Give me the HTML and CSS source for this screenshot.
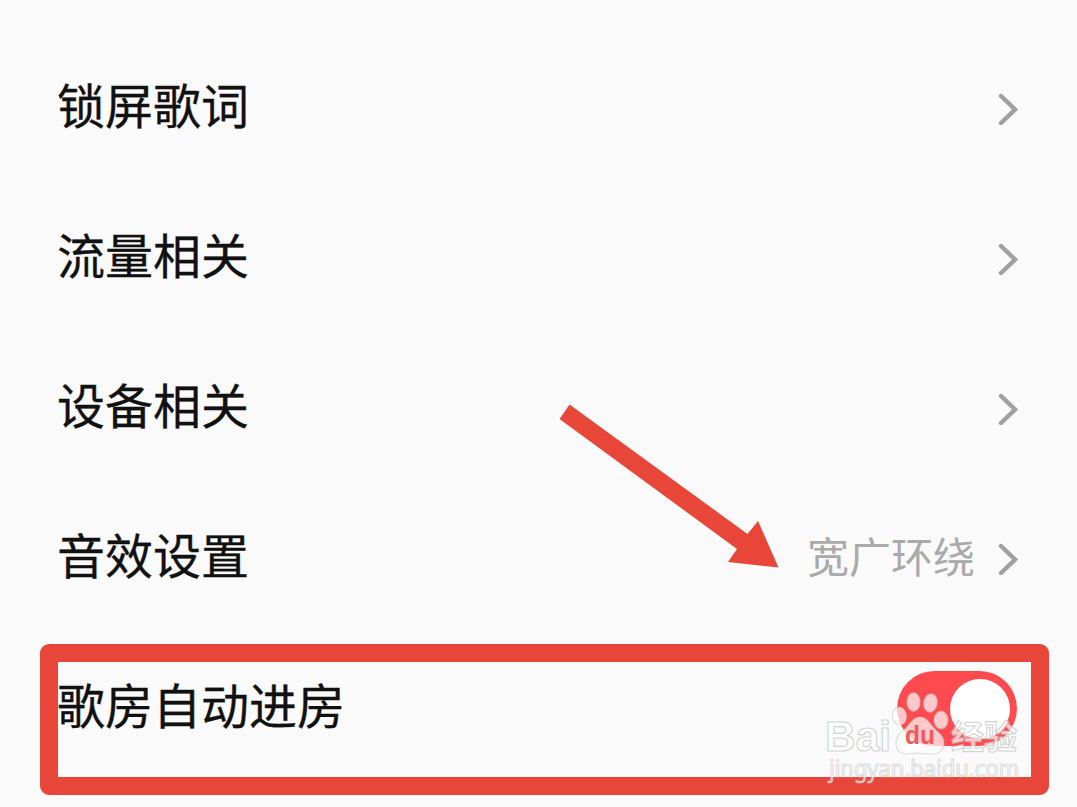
FILE: index.html
```html
<!DOCTYPE html>
<html lang="zh-CN">

<head>
    <meta charset="UTF-8">
    <meta name="viewport" content="width=device-width, initial-scale=1.0">
    <title>设置</title>
    <link rel="stylesheet" href="styles.css">
</head>

<body>
    <div class="settings">
        <div class="row">
            <span class="label">锁屏歌词</span>
            <svg class="chevron" viewBox="0 0 20 32"><path d="M3 3L17 16.5L3 30" /></svg>
        </div>
        <div class="row">
            <span class="label">流量相关</span>
            <svg class="chevron" viewBox="0 0 20 32"><path d="M3 3L17 16.5L3 30" /></svg>
        </div>
        <div class="row">
            <span class="label">设备相关</span>
            <svg class="chevron" viewBox="0 0 20 32"><path d="M3 3L17 16.5L3 30" /></svg>
        </div>
        <div class="row">
            <span class="label">音效设置</span>
            <span class="value">宽广环绕</span>
            <svg class="chevron" viewBox="0 0 20 32"><path d="M3 3L17 16.5L3 30" /></svg>
        </div>
        <div class="row">
            <span class="label">歌房自动进房</span>
            <span class="toggle"><span class="knob"></span></span>
        </div>
    </div>

    <!-- Annotations over the list -->
    <div class="frame"></div>
    <svg class="arrow" viewBox="0 0 220 164">
        <polygon points="10.5,0.5 188.5,130 199,117 219.5,163.5 169,158 178,145 0.5,15" />
    </svg>

    <!-- Watermark -->
    <svg class="watermark" viewBox="0 0 200 100">
        <g class="paw">
            <ellipse cx="77.5" cy="31" rx="7" ry="9" transform="rotate(-8 77.5 31)" />
            <ellipse cx="91.5" cy="17" rx="6.6" ry="9.3" />
            <ellipse cx="108.5" cy="18" rx="6.8" ry="9.2" transform="rotate(10 108.5 18)" />
            <ellipse cx="119" cy="35" rx="7" ry="9" />
            <path d="M98 32C104 32 107 37 111 42C116 48 122 50 122 58C122 65 117 69 110 69C103 69 93 67 86 69C79 70 74 66 74 58C74 50 80 47 85 42C89 37 92 32 98 32Z" />
        </g>
        <text class="wm-logo" x="3" y="66" textLength="66" lengthAdjust="spacingAndGlyphs">Bai</text>
        <text class="wm-du" x="83" y="59" textLength="30" lengthAdjust="spacingAndGlyphs">du</text>
        <text class="wm-name" x="129" y="64">经验</text>
        <text class="wm-url" x="7" y="92" textLength="190" lengthAdjust="spacingAndGlyphs">jingyan.baidu.com</text>
    </svg>
</body>

</html>
```
FILE: styles.css
```css
body {
    position: relative;
    margin: 0;
    width: 1077px;
    height: 807px;
    overflow: hidden;
    background: #fafafa;
    font-family: "Noto Sans CJK SC", sans-serif;
    color: #111;
}
/* Settings list */

.settings {
    padding: 34px 60px 0 57px;
}

.row {
    display: flex;
    align-items: center;
    height: 150px;
}

.label {
    flex: 1;
    font-size: 48px;
    line-height: 70px;
    padding-bottom: 13px;
    -webkit-text-stroke: 0.3px #111;
}

.value {
    margin-right: 23px;
    padding-bottom: 9px;
    font-size: 42px;
    line-height: 60px;
    color: #aaa;
}

.chevron {
    width: 20px;
    height: 32px;
    margin-right: -1px;
    fill: none;
    stroke: #a0a0a0;
    stroke-width: 4.4;
    stroke-linecap: round;
}
/* Toggle */

.toggle {
    display: flex;
    align-items: center;
    justify-content: flex-end;
    box-sizing: border-box;
    width: 120px;
    height: 75px;
    margin-bottom: 1px;
    padding-right: 7px;
    border-radius: 38px;
    background: #ff4b50;
}

.knob {
    width: 60px;
    height: 60px;
    border-radius: 50%;
    background: #fff;
}
/* Annotations */

.frame {
    position: absolute;
    left: 40px;
    top: 644px;
    box-sizing: border-box;
    width: 1009px;
    height: 151px;
    border: 18px solid #e84639;
    border-radius: 9px;
}

.arrow {
    position: absolute;
    left: 559px;
    top: 404px;
    width: 220px;
    height: 164px;
    fill: #e84639;
}
/* Watermark */

.watermark {
    position: absolute;
    left: 822px;
    top: 685px;
    width: 200px;
    height: 100px;
    overflow: visible;
    fill: rgba(255, 255, 255, 0.7);
    stroke: rgba(185, 185, 185, 0.6);
    stroke-width: 1.2;
}

.paw {
    stroke: rgba(200, 190, 190, 0.5);
}

.wm-logo {
    font: bold 43px "Liberation Sans", sans-serif;
}

.wm-du {
    font: bold 25px "Liberation Sans", sans-serif;
    fill: #f0585a;
    stroke: none;
}

.wm-name {
    font: bold 33px "Noto Sans CJK SC", sans-serif;
}

.wm-url {
    font: 23px "Noto Sans", sans-serif;
    stroke: rgba(195, 195, 195, 0.55);
}
```
